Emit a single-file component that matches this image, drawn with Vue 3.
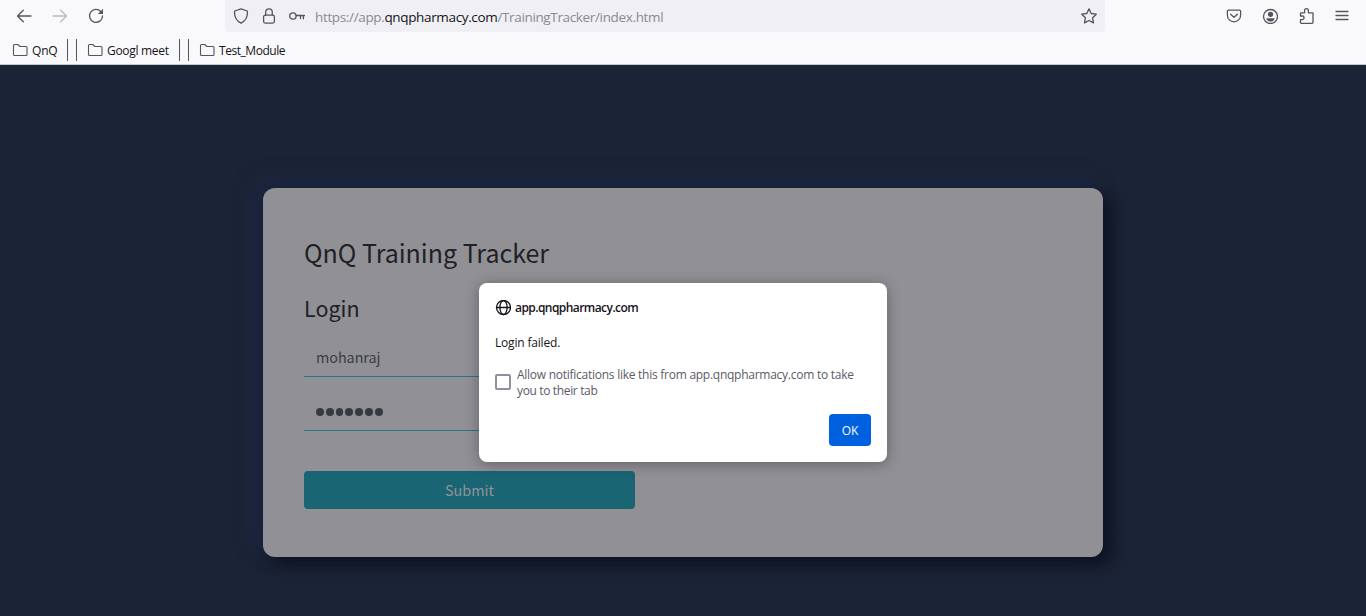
<script setup>
import { ref } from 'vue'

const username = ref('mohanraj')
const password = ref('●●●●●●●')
const bookmarks = [
  { name: 'QnQ', kind: 'qnq', dividers: 2 },
  { name: 'Googl meet', kind: 'meet', dividers: 2 },
  { name: 'Test_Module', kind: 'test', dividers: 0 },
]
</script>

<template>
  <div class="browser">
    <header class="chrome">
      <div class="toolbar">
        <div class="nav">
          <svg class="ico" viewBox="0 0 16 16"><path d="M15 8H1.600M7.300 2.200 1.500 8l5.800 5.800" /></svg>
          <svg class="ico off" viewBox="0 0 16 16"><path d="M1 8h13.400M8.700 2.200 14.500 8l-5.800 5.800" /></svg>
          <svg class="ico" viewBox="0 0 16 16"><path d="M12.900 3.600A6.500 6.500 0 1 0 14.500 8" /><path class="fill" d="M15 .8v5.100H9.900z" /></svg>
        </div>
        <div class="urlbar">
          <svg class="ico" viewBox="0 0 16 16"><path d="M8 .9 14.300 3c.6 4.600-.8 9.300-6.300 12.100C2.500 12.300 1.100 7.600 1.700 3z" /></svg>
          <svg class="ico" viewBox="0 0 16 16"><rect x="2.600" y="7.200" width="10.800" height="7.900" rx="1.500" /><path d="M4.700 7V4.200a3.300 3.300 0 0 1 6.600 0V7" /></svg>
          <svg class="ico" viewBox="0 0 16 16"><circle cx="3.900" cy="8" r="3.200" /><path d="M7.100 7.500h8.600M11.500 7.500v3M14.400 7.500v3.300" /></svg>
          <span class="url">https://app.<b>qnqpharmacy.com</b>/TrainingTracker/index.html</span>
          <svg class="ico" viewBox="0 0 16 16"><path d="m8 .9 2.200 4.600 5.100.7-3.700 3.600.9 5.100L8 12.500l-4.500 2.400.9-5.100L.7 6.200l5.100-.7z" /></svg>
        </div>
        <div class="tools">
          <svg class="ico" viewBox="0 0 16 16"><path d="M2.400 2.100h11.200a1 1 0 0 1 1 1v4.100a6.600 6.600 0 0 1-13.200 0V3.100a1 1 0 0 1 1-1z" /><path d="M4.600 6.200 8 9.300l3.400-3.100" /></svg>
          <svg class="ico" viewBox="0 0 16 16"><circle cx="8.500" cy="8.500" r="7" /><circle class="fill" cx="8.500" cy="6.300" r="2.600" /><path class="fill" d="M4.300 10.200h8.400a4.300 4.300 0 0 1-8.400 0z" /></svg>
          <svg class="ico" viewBox="0 0 16 16"><path d="M2.500 8V5.600a.8.8 0 0 1 .8-.8h3.300V2.600a1.900 1.900 0 0 1 3.800 0v2.200h3.800a.8.8 0 0 1 .8.8v8.900a.8.8 0 0 1-.8.8H3.300a.8.8 0 0 1-.8-.8v-2.900h1.800a1.800 1.800 0 0 0 0-3.600z" /></svg>
          <svg class="ico" viewBox="0 0 16 16"><path d="M2 3.500h12M2 7.500h12M2 11.500h12" /></svg>
        </div>
      </div>
      <nav class="bookmarks">
        <template v-for="b in bookmarks" :key="b.name">
          <div class="bookmark" :class="b.kind">
            <svg class="folder" viewBox="0 0 16 16"><path d="M1.500 3.500a1 1 0 0 1 1-1h3.200L8 4.500H14a1 1 0 0 1 1 1v7a1 1 0 0 1-1 1H2.500a1 1 0 0 1-1-1z" /></svg>
            <span>{{ b.name }}</span>
          </div>
          <i v-for="n in b.dividers" :key="n" class="divider"></i>
        </template>
      </nav>
    </header>

    <main class="page">
      <section class="card">
        <h1>QnQ Training Tracker</h1>
        <h2>Login</h2>
        <form class="form" @submit.prevent>
          <div class="field"><span class="user">{{ username }}</span></div>
          <div class="field second"><span class="dots"><i v-for="(c, n) in password" :key="n"></i></span></div>
          <button class="submit" type="submit"><span>Submit</span></button>
        </form>
      </section>
    </main>

    <div class="dialog" role="alertdialog">
      <div class="origin">
        <svg class="globe" viewBox="0 0 16 16"><circle cx="8.500" cy="7.500" r="7" /><ellipse cx="8.500" cy="7.500" rx="3.600" ry="7" /><path d="M1.500 7.500h14" /></svg>
        <span>app.qnqpharmacy.com</span>
      </div>
      <p class="message"><span>Login failed.</span></p>
      <label class="allow">
        <i class="box"></i>
        <span class="copy"><span class="l1">Allow notifications like this from app.qnqpharmacy.com to take</span><br /><span class="l2">you to their tab</span></span>
      </label>
      <button class="ok"><span>OK</span></button>
    </div>
  </div>
</template>

<style>
body {
  margin: 0;
  overflow: hidden;
}
</style>

<style scoped>
.browser {
  position: relative;
  display: flex;
  flex-direction: column;
  width: 1366px;
  height: 616px;
  overflow: hidden;
  font-family: "Open Sans", "Noto Sans", sans-serif;
  font-size: 12px;
  color: #15141a;
  white-space: nowrap;
}
.chrome {
  height: 64px;
  background: #f9f9fb;
  border-bottom: 1px solid #c9c9cd;
}
.toolbar {
  display: flex;
  height: 32px;
}
svg {
  display: block;
  flex: none;
  fill: none;
  stroke: #55545f;
  stroke-width: 1.300;
  stroke-linecap: round;
  stroke-linejoin: round;
}
.ico {
  width: 16px;
  height: 16px;
}
.fill {
  fill: #55545f;
  stroke: none;
}
.off {
  stroke: #bcbbc0;
}
.nav {
  display: flex;
  gap: 20px;
  width: 209px;
  padding: 8px 0 0 16px;
}
.urlbar {
  display: flex;
  align-items: center;
  box-sizing: border-box;
  width: 880px;
  padding: 0 8px;
  gap: 12px;
  border-radius: 0 0 4px 4px;
  background: #f0f0f4;
}
.url {
  flex: 1;
  margin-left: -2px;
  padding-top: 2px;
  font-size: 13.500px;
  line-height: 20px;
  letter-spacing: -0.350px;
  color: #8a8991;
}
.url b {
  font-weight: 400;
  color: #15141a;
}
.tools {
  display: flex;
  gap: 20px;
  padding: 8px 0 0 121px;
}
.bookmarks {
  display: flex;
  align-items: center;
  height: 32px;
  padding-left: 12px;
}
.bookmark {
  display: flex;
  align-items: center;
  gap: 4px;
  height: 32px;
  box-sizing: border-box;
  padding-top: 6px;
  line-height: 16px;
}
.qnq {
  width: 55px;
  letter-spacing: -0.200px;
}
.meet {
  width: 92px;
  letter-spacing: -0.300px;
}
.test {
  letter-spacing: -0.450px;
}
.folder {
  width: 16px;
  height: 16px;
  margin-top: -2px;
  stroke-width: 1.100;
}
.divider {
  width: 1px;
  height: 22px;
  margin-top: 4px;
  margin-right: 8px;
  background: #55545f;
}
.divider + .bookmark {
  margin-left: 2px;
}
.page {
  flex: 1;
  display: flex;
  justify-content: center;
  align-items: flex-start;
  padding-top: 123px;
  background: #1b2336;
}
.card {
  box-sizing: border-box;
  width: 840px;
  height: 369px;
  padding: 46px 41px 48px;
  border-radius: 12px;
  background: #919095;
  box-shadow: 8px 8px 16px #0d1220, -8px -8px 20px #1c2742;
  font-family: "Noto Sans CJK SC", sans-serif;
  color: #1f2126;
}
h1,
h2 {
  margin: 0;
  font-weight: 400;
}
h1 {
  height: 58px;
  font-size: 25px;
  line-height: 36px;
}
h2 {
  height: 47px;
  font-size: 21.500px;
  line-height: 32px;
}
.form {
  width: 331px;
}
.field {
  display: flex;
  align-items: center;
  box-sizing: border-box;
  height: 38px;
  padding: 0 12px;
  border-bottom: 1px solid #2b7385;
  font-size: 14.300px;
  color: #3a3d44;
}
.user {
  padding-bottom: 2px;
}
.second {
  margin-top: 16px;
}
.dots {
  display: flex;
  gap: 2px;
  padding-top: 1px;
}
.dots i {
  width: 7.800px;
  height: 7.800px;
  border-radius: 50%;
  background: #353940;
}
.submit {
  display: block;
  width: 331px;
  height: 38px;
  margin-top: 40px;
  padding: 0;
  border: 0;
  border-radius: 4px;
  background: #1a6573;
  font: 400 14.400px/38px "Noto Sans CJK SC", sans-serif;
  color: #929398;
}
.dialog {
  position: absolute;
  left: 479px;
  top: 283px;
  display: flex;
  flex-direction: column;
  box-sizing: border-box;
  width: 408px;
  height: 179px;
  padding: 16px;
  border-radius: 8px;
  background: #fff;
  box-shadow: 0 2px 14px rgba(30, 28, 40, 0.400);
}
.origin {
  display: flex;
  align-items: center;
  gap: 4px;
  height: 18px;
  font-weight: 600;
  letter-spacing: -0.560px;
}
.origin span {
  padding-bottom: 2px;
}
.globe {
  width: 16px;
  height: 16px;
  stroke: #15141a;
}
.message {
  height: 16px;
  margin: 18px 0 15px;
  line-height: 16px;
  letter-spacing: -0.180px;
}
.allow {
  display: flex;
  align-items: center;
  gap: 6px;
  line-height: 16px;
  letter-spacing: -0.260px;
  color: #5b5b66;
}
.copy {
  padding-top: 1px;
  margin-bottom: -1px;
}
.l2 {
  letter-spacing: -0.350px;
}
.box {
  box-sizing: border-box;
  width: 16px;
  height: 16px;
  border: 2px solid #8f8f9d;
  border-radius: 2px;
}
.ok {
  align-self: flex-end;
  width: 42px;
  height: 32px;
  margin-top: auto;
  padding: 1px 0 0;
  border: 0;
  border-radius: 4px;
  background: #0061e0;
  font: 500 12px/31px "Open Sans", sans-serif;
  color: #fbfbfe;
}
</style>
